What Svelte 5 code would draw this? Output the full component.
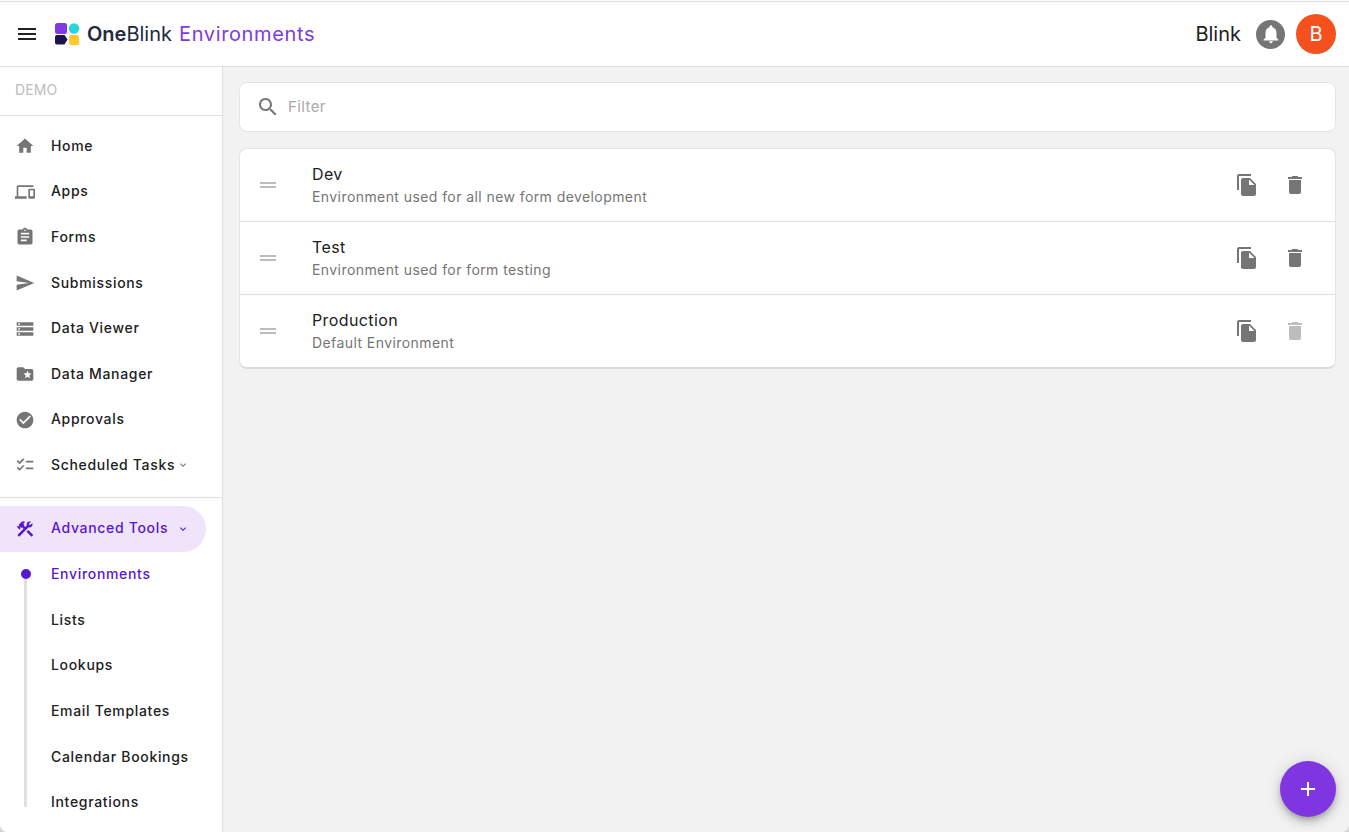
<script>
  const P = {
    home: 'M10 20v-6h4v6h5v-8h3L12 3 2 12h3v8z',
    apps: 'M4 6h18V4H4c-1.1 0-2 .9-2 2v11H0v3h14v-3H4V6zm19 2h-6c-.55 0-1 .45-1 1v10c0 .55.45 1 1 1h6c.55 0 1-.45 1-1V9c0-.55-.45-1-1-1zm-1 9h-4v-7h4v7z',
    forms: 'M19 3h-4.18C14.4 1.84 13.3 1 12 1c-1.3 0-2.4.84-2.82 2H5c-1.1 0-2 .9-2 2v14c0 1.1.9 2 2 2h14c1.1 0 2-.9 2-2V5c0-1.1-.9-2-2-2zm-7 0c.55 0 1 .45 1 1s-.45 1-1 1-1-.45-1-1 .45-1 1-1zm2 14H7v-2h7v2zm3-4H7v-2h10v2zm0-4H7V7h10v2z',
    send: 'M2.01 21L23 12 2.01 3 2 10l15 2-15 2z',
    storage: 'M2 20h20v-4H2v4zm2-3h2v2H4v-2zM2 4v4h20V4H2zm4 3H4V5h2v2zm-4 7h20v-4H2v4zm2-3h2v2H4v-2z',
    folder: 'M20 6h-8l-2-2H4c-1.1 0-1.99.9-1.99 2L2 18c0 1.1.9 2 2 2h16c1.1 0 2-.9 2-2V8c0-1.1-.9-2-2-2zm-2.06 11L15 15.28 12.06 17l.78-3.33-2.59-2.24 3.41-.29L15 8l1.34 3.14 3.41.29-2.59 2.24.78 3.33z',
    check: 'M12 2C6.48 2 2 6.48 2 12s4.48 10 10 10 10-4.48 10-10S17.52 2 12 2zm-2 15l-5-5 1.41-1.41L10 14.17l7.59-7.59L19 8l-9 9z',
    rule: 'M22 7h-9v2h9V7zm0 8h-9v2h9v-2zM5.54 11L2 7.46l1.41-1.41 2.12 2.12 4.24-4.24 1.41 1.41L5.54 11zm0 8L2 15.46l1.41-1.41 2.12 2.12 4.24-4.24 1.41 1.41L5.54 19z',
    tools: 'M13.78 15.3l6 6 2.11-2.16-6-6zM17.5 10.1c-.39 0-.81-.05-1.14-.19L4.97 21.25l-2.11-2.11 7.41-7.4L8.5 9.96l-.72.7-1.45-1.41v2.84l-.7.7-3.54-3.54.7-.7H5.6L4.2 7.14l3.58-3.58c1.17-1.17 3.07-1.17 4.24 0L9.9 5.68l1.41 1.41-.71.71 1.79 1.79 1.82-1.88c-.14-.33-.2-.75-.2-1.12 0-1.99 1.58-3.56 3.54-3.56.59 0 1.11.14 1.58.41l-2.7 2.7 1.5 1.5 2.69-2.69c.27.47.41.97.41 1.59 0 1.98-1.58 3.55-3.53 3.55z',
    copy: 'M16 1H4c-1.1 0-2 .9-2 2v14h2V3h12V1zm-1 4l6 6v10c0 1.1-.9 2-2 2H7.99C6.89 23 6 22.1 6 21l.01-14c0-1.1.89-2 1.99-2h7zm-1 7h5.5L14 6.5V12z',
    trash: 'M6 19c0 1.1.9 2 2 2h8c1.1 0 2-.9 2-2V7H6v12zM19 4h-3.5l-1-1h-5l-1 1H5v2h14V4z',
    search: 'M15.5 14h-.79l-.28-.27C15.41 12.59 16 11.11 16 9.5 16 5.91 13.09 3 9.5 3S3 5.91 3 9.5 5.91 16 9.5 16c1.61 0 3.09-.59 4.23-1.57l.27.28v.79l5 4.99L20.49 19l-4.99-5zm-6 0C7.01 14 5 11.99 5 9.5S7.01 5 9.5 5 14 7.01 14 9.5 11.99 14 9.5 14z',
    menu: 'M3 18h18v-2H3v2zm0-5h18v-2H3v2zm0-7v2h18V6H3z',
    bell: 'M12 22c1.1 0 2-.9 2-2h-4c0 1.1.89 2 2 2zm6-6v-5c0-3.07-1.64-5.64-4.5-6.32V4c0-.83-.67-1.5-1.5-1.5s-1.5.67-1.5 1.5v.68C7.63 5.36 6 7.92 6 11v5l-2 2v1h16v-1l-2-2z',
    drag: 'M20 9H4v2h16V9zM4 15h16v-2H4v2z',
    add: 'M19 13h-6v6h-2v-6H5v-2h6V5h2v6h6v2z',
    expand: 'M16.59 8.59L12 13.17 7.41 8.59 6 10l6 6 6-6z'
  };
  const nav = [
    ['Home', 'home'], ['Apps', 'apps'], ['Forms', 'forms'], ['Submissions', 'send'],
    ['Data Viewer', 'storage'], ['Data Manager', 'folder'], ['Approvals', 'check']
  ];
  const sub = ['Lists', 'Lookups', 'Email Templates', 'Calendar Bookings', 'Integrations'];
  const envs = [
    { name: 'Dev', desc: 'Environment used for all new form development' },
    { name: 'Test', desc: 'Environment used for form testing' },
    { name: 'Production', desc: 'Default Environment', locked: true }
  ];
</script>

{#snippet icon(d, cls)}
  <svg class={cls} viewBox="0 0 24 24" aria-hidden="true"><path {d} /></svg>
{/snippet}

<div class="page">
  <header class="top">
    <button class="menu">{@render icon(P.menu, 'i24 dark')}</button>
    <svg class="logo" viewBox="0 0 26 24" aria-hidden="true">
      <rect x="1" y="1" width="12" height="11" rx="2.5" fill="#7f3ae0" />
      <circle cx="20" cy="6.500" r="5.200" fill="#2bd4d9" />
      <path d="M3 13h7.500l3 4.500-3 5H3a2 2 0 0 1-2-2V15a2 2 0 0 1 2-2z" fill="#1c1250" />
      <rect x="15" y="13" width="10" height="10" rx="2" fill="#fdc92f" />
    </svg>
    <div class="brand"><b>One</b>Blink</div>
    <div class="product">Environments</div>
    <div class="spacer"></div>
    <div class="user">Blink</div>
    <div class="bell">{@render icon(P.bell, 'i20 white')}</div>
    <div class="avatar">B</div>
  </header>

  <div class="body">
    <aside class="side">
      <div class="tenant">DEMO</div>
      <nav class="group">
        {#each nav as [label, key]}
          <div class="item">{@render icon(P[key], 'i20 grey')}<span>{label}</span></div>
        {/each}
        <div class="item">{@render icon(P.rule, 'i20 grey')}<span>Scheduled Tasks</span>{@render icon(P.expand, 'chev grey')}</div>
      </nav>
      <nav class="group second">
        <div class="item active">{@render icon(P.tools, 'i20 violet')}<span>Advanced Tools</span>{@render icon(P.expand, 'chev violet')}</div>
        <div class="subs">
          <div class="rail"></div>
          <div class="dot"></div>
          <div class="item current"><span>Environments</span></div>
          {#each sub as label}
            <div class="item"><span>{label}</span></div>
          {/each}
        </div>
      </nav>
    </aside>

    <main class="main">
      <div class="filter">
        {@render icon(P.search, 'i24 grey')}
        <span>Filter</span>
      </div>
      <div class="list">
        {#each envs as env}
          <div class="row">
            <div class="handle">{@render icon(P.drag, 'i24 light')}</div>
            <div class="text">
              <div class="name">{env.name}</div>
              <div class="desc">{env.desc}</div>
            </div>
            <div class="act">{@render icon(P.copy, 'i24 grey')}</div>
            <div class="act">{@render icon(P.trash, env.locked ? 'i24 off' : 'i24 grey')}</div>
          </div>
        {/each}
      </div>
    </main>
  </div>

  <button class="fab">{@render icon(P.add, 'i24 white')}</button>
</div>

<style>
  :global(body) { margin: 0; overflow: hidden; background: #d4d4d4; }
  .page {
    position: relative;
    height: 832px;
    box-sizing: border-box;
    display: flex;
    flex-direction: column;
    overflow: hidden;
    background: #fff;
    padding-top: 1px;
    border-radius: 0 0 8px 8px;
    font-family: Inter, "Noto Sans", sans-serif;
    color: #212121;
  }
  svg { display: block; flex: none; }
  .i24 { width: 24px; height: 24px; }
  .i20 { width: 20px; height: 20px; }
  .chev { width: 12px; height: 12px; }
  .grey { fill: #757575; }
  .dark { fill: #212121; }
  .white { fill: #fff; }
  .violet { fill: #5617cf; }
  .light { fill: #bdbdbd; }
  .off { fill: #bdbdbd; }

  .top {
    flex: none;
    height: 64px;
    background: #fff;
    border-top: 1px solid #e0e0e0;
    border-bottom: 1px solid #e0e0e0;
    display: flex;
    align-items: center;
    padding: 0 13px 0 15px;
  }
  .menu { border: 0; background: none; padding: 0; width: 24px; height: 24px; }
  .logo { width: 26px; height: 24px; margin-left: 15px; }
  .brand { margin-left: 7px; font-size: 20px; color: #232a3f; }
  .brand b { font-weight: 600; }
  .product { margin-left: 7px; font-size: 20px; color: #7f3ae0; letter-spacing: .63px; }
  .spacer { flex: 1; }
  .user { font-size: 20px; margin-right: 15px; }
  .bell {
    width: 29px; height: 29px; border-radius: 50%; background: #757575;
    display: flex; align-items: center; justify-content: center;
  }
  .bell svg { width: 22px; height: 22px; }
  .avatar {
    margin-left: 11px;
    width: 40px; height: 40px; border-radius: 50%; background: #f4511e; color: #fff;
    display: flex; align-items: center; justify-content: center; font-size: 20px;
  }

  .body { flex: 1; display: flex; min-height: 0; background: #f2f2f2; }
  .side {
    flex: none;
    width: 222px;
    background: #fff;
    border-right: 1px solid #e0e0e0;
    overflow: hidden;
  }
  .tenant {
    height: 49px;
    box-sizing: border-box;
    padding: 14px 0 0 15px;
    font-size: 14px;
    line-height: 18px;
    letter-spacing: .15px;
    color: #bdbdbd;
    border-bottom: 1px solid #e0e0e0;
  }
  .group { padding: 7.500px 16px 9px 0; border-bottom: 1px solid #e0e0e0; }
  .group.second { border-bottom: 0; padding-top: 8px; padding-bottom: 0; }
  .item {
    height: 45.600px;
    display: flex;
    align-items: center;
    padding-left: 15px;
    font-size: 14px;
    font-weight: 500;
    letter-spacing: .68px;
    white-space: nowrap;
  }
  .item span { margin: 0 0 2px 16px; }
  .item .chev { margin-left: 2px; }
  .active {
    background: #efe4f9;
    color: #5617cf;
    border-radius: 0 23px 23px 0;
  }
  .active .chev { margin-left: 9px; }
  .active span { margin-bottom: 3px; }
  .subs { position: relative; }
  .subs .item { padding-left: 35px; }
  .current { color: #5617cf; }
  .rail { position: absolute; left: 24px; top: 22px; width: 3px; height: 233px; background: #e0e0e0; }
  .dot { position: absolute; left: 21px; top: 17px; width: 10px; height: 10px; border-radius: 50%; background: #5617cf; }

  .main {
    flex: 1;
    min-width: 0;
    padding: 15px 13px 0 16px;
    display: flex;
    flex-direction: column;
    gap: 16px;
  }
  .filter, .list {
    background: #fff;
    border: 1px solid #e4e4e4;
    border-radius: 8px;
  }
  .filter {
    height: 50px;
    box-sizing: border-box;
    display: flex;
    align-items: center;
    padding-left: 16px;
    padding-bottom: 1px;
    gap: 8px;
    font-size: 15px;
    letter-spacing: .4px;
    color: #a8a8a8;
  }
  .list { border-bottom: 2px solid #dcdcdc; }
  .row {
    height: 72px;
    display: flex;
    align-items: center;
    padding: 0 16px 0 16px;
    border-top: 1px solid #e0e0e0;
  }
  .row:first-child { border-top: 0; }
  .handle { width: 56px; flex: none; }
  .text { flex: 1; min-width: 0; }
  .name { font-size: 16px; line-height: 22px; letter-spacing: .4px; }
  .desc { font-size: 14px; line-height: 20px; letter-spacing: .42px; color: #757575; margin-top: 2px; }
  .act { width: 48px; height: 48px; display: flex; align-items: center; justify-content: center; flex: none; }

  .fab {
    position: absolute;
    right: 13px;
    bottom: 15px;
    width: 56px;
    height: 56px;
    padding: 0;
    border: 0;
    border-radius: 50%;
    background: #7f35e0;
    box-shadow: 0 3px 5px -1px rgba(0,0,0,.2), 0 6px 10px 0 rgba(0,0,0,.14), 0 1px 18px 0 rgba(0,0,0,.12);
    display: flex;
    align-items: center;
    justify-content: center;
  }
</style>
